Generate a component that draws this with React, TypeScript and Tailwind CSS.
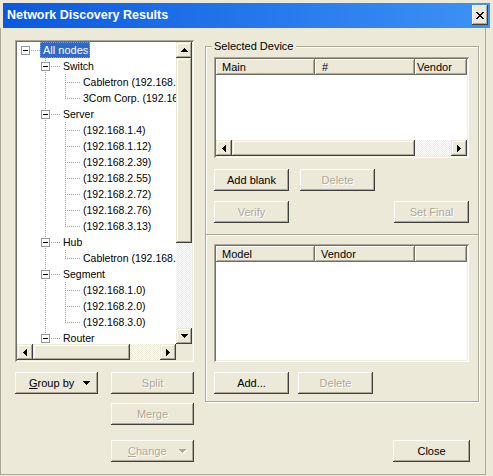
import React from "react";

type Dir = "up" | "down" | "left" | "right";

function Tri({ dir, color = "#000", className = "" }: { dir: Dir; color?: string; className?: string }) {
  const rows = [1, 3, 5, 7];
  if (dir === "up" || dir === "down") {
    return (
      <svg width="7" height="4" className={"block shrink-0 " + className} shapeRendering="crispEdges">
        {rows.map((w, i) => (
          <rect key={i} x={(7 - w) / 2} y={dir === "up" ? i : 3 - i} width={w} height={1} fill={color} />
        ))}
      </svg>
    );
  }
  return (
    <svg width="4" height="7" className={"block shrink-0 " + className} shapeRendering="crispEdges">
      {rows.map((w, i) => (
        <rect key={i} x={dir === "left" ? i : 3 - i} y={(7 - w) / 2} width={1} height={w} fill={color} />
      ))}
    </svg>
  );
}

const raisedBtn =
  "bg-[#ece9d8] shadow-[inset_-1px_-1px_#404040,inset_1px_1px_#ffffff,inset_-2px_-2px_#aca899,inset_2px_2px_#ece9d8]";
const raisedScroll =
  "bg-[#ece9d8] shadow-[inset_-1px_-1px_#404040,inset_1px_1px_#ece9d8,inset_-2px_-2px_#aca899,inset_2px_2px_#ffffff]";
const sunken =
  "shadow-[inset_1px_1px_#aca899,inset_-1px_-1px_#ffffff,inset_2px_2px_#716f64,inset_-2px_-2px_#f1efe2]";
const hatch = "bg-[image:repeating-conic-gradient(#ffffff_0_25%,#ece9d8_0_50%)] bg-[length:2px_2px]";
const disabledText = "text-[#aca899] [text-shadow:1px_1px_0_#ffffff]";

function ScrollBtn({ dir }: { dir: Dir }) {
  return (
    <div className={"w-[16px] h-[16px] shrink-0 flex items-center justify-center " + raisedScroll}>
      <Tri dir={dir} />
    </div>
  );
}

function Btn({
  children,
  disabled,
  className = "",
}: {
  children: React.ReactNode;
  disabled?: boolean;
  className?: string;
}) {
  return (
    <div
      className={
        "h-[22px] flex items-center justify-center leading-none " +
        raisedBtn +
        " " +
        (disabled ? disabledText : "text-black") +
        " " +
        className
      }
    >
      {children}
    </div>
  );
}

type Row = {
  label: string;
  level: number;
  kids?: boolean;
  last?: boolean;
  first?: boolean;
  sel?: boolean;
  cont: boolean[];
};

const L2 = [false, true];
const rows: Row[] = [
  { label: "All nodes", level: 0, kids: true, last: true, first: true, sel: true, cont: [] },
  { label: "Switch", level: 1, kids: true, cont: [false] },
  { label: "Cabletron (192.168.", level: 2, cont: L2 },
  { label: "3Com Corp. (192.16", level: 2, last: true, cont: L2 },
  { label: "Server", level: 1, kids: true, cont: [false] },
  { label: "(192.168.1.4)", level: 2, cont: L2 },
  { label: "(192.168.1.12)", level: 2, cont: L2 },
  { label: "(192.168.2.39)", level: 2, cont: L2 },
  { label: "(192.168.2.55)", level: 2, cont: L2 },
  { label: "(192.168.2.72)", level: 2, cont: L2 },
  { label: "(192.168.2.76)", level: 2, cont: L2 },
  { label: "(192.168.3.13)", level: 2, last: true, cont: L2 },
  { label: "Hub", level: 1, kids: true, cont: [false] },
  { label: "Cabletron (192.168.", level: 2, last: true, cont: L2 },
  { label: "Segment", level: 1, kids: true, cont: [false] },
  { label: "(192.168.1.0)", level: 2, cont: L2 },
  { label: "(192.168.2.0)", level: 2, cont: L2 },
  { label: "(192.168.3.0)", level: 2, last: true, cont: L2 },
  { label: "Router", level: 1, kids: true, cont: [false] },
];

const LINE = "#a0a0a0";

function ContCell({ on }: { on: boolean }) {
  return (
    <svg width="20" height="16" className="block shrink-0" shapeRendering="crispEdges">
      {on && <line x1="10.5" y1="0" x2="10.5" y2="16" stroke={LINE} strokeDasharray="1 1" />}
    </svg>
  );
}

function NodeCell({ row }: { row: Row }) {
  return (
    <svg width="25" height="16" className="block shrink-0" shapeRendering="crispEdges">
      {!row.first && <line x1="10.5" y1="0" x2="10.5" y2="8" stroke={LINE} strokeDasharray="1 1" />}
      {!row.last && <line x1="10.5" y1="8" x2="10.5" y2="16" stroke={LINE} strokeDasharray="1 1" />}
      <line x1="10" y1="8.5" x2="25" y2="8.5" stroke={LINE} strokeDasharray="1 1" />
      {row.kids && (
        <>
          <rect x="6.5" y="4.5" width="8" height="8" fill="#ffffff" stroke="#919b9c" />
          <line x1="8" y1="8.5" x2="13" y2="8.5" stroke="#000000" />
        </>
      )}
    </svg>
  );
}

function Tree() {
  return (
    <div className={"h-[322px] p-[2px] bg-white grid grid-cols-[159px_16px] grid-rows-[302px_16px] " + sunken}>
      <div className="overflow-hidden bg-white text-[10.5px]">
        {rows.map((r, i) => (
          <div key={i} className="flex h-[16px] ml-[-2px] items-center">
            {r.cont.map((c, j) => (
              <ContCell key={j} on={c} />
            ))}
            <NodeCell row={r} />
            <span
              className={
                "h-[16px] leading-[16px] whitespace-nowrap pl-[3px] pr-[2px] " +
                (r.sel
                  ? "bg-[#316ac5] text-white outline-1 outline-dotted outline-[#ce953a] -outline-offset-1 text-[11px]"
                  : "text-black")
              }
            >
              {r.label}
            </span>
          </div>
        ))}
      </div>
      <div className="flex flex-col">
        <ScrollBtn dir="up" />
        <div className={"h-[185px] shrink-0 " + raisedScroll} />
        <div className={"flex-1 " + hatch} />
        <ScrollBtn dir="down" />
      </div>
      <div className="flex">
        <ScrollBtn dir="left" />
        <div className={"w-[97px] shrink-0 " + raisedScroll} />
        <div className={"flex-1 " + hatch} />
        <ScrollBtn dir="right" />
      </div>
      <div className="bg-[#ece9d8]" />
    </div>
  );
}

const headCell =
  "h-[16px] flex items-center shrink-0 bg-[#ece9d8] shadow-[inset_-1px_-1px_#716f64,inset_1px_1px_#ffffff,inset_-2px_-2px_#aca899]";

function ListView({
  cols,
  height,
  scroll,
}: {
  cols: { label: string; w: string; pl: string }[];
  height: string;
  scroll?: boolean;
}) {
  return (
    <div className={"p-[2px] bg-white flex flex-col " + height + " " + sunken}>
      <div className="flex h-[16px] shrink-0 overflow-hidden">
        {cols.map((c, i) => (
          <div key={i} className={headCell + " " + c.w + " " + c.pl}>
            {c.label}
          </div>
        ))}
      </div>
      <div className="flex-1 bg-white" />
      {scroll && (
        <div className="flex h-[16px] shrink-0">
          <ScrollBtn dir="left" />
          <div className={"w-[183px] shrink-0 " + raisedScroll} />
          <div className={"flex-1 " + hatch} />
          <ScrollBtn dir="right" />
        </div>
      )}
    </div>
  );
}

function CloseGlyph() {
  const px = [
    "##....##",
    ".##..##.",
    "..####..",
    "...##...",
    "..####..",
    ".##..##.",
    "##....##",
  ];
  return (
    <svg width="8" height="7" className="block" shapeRendering="crispEdges">
      {px.flatMap((row, y) =>
        row.split("").map((ch, x) => (ch === "#" ? <rect key={x + "-" + y} x={x} y={y} width="1" height="1" fill="#000" /> : null))
      )}
    </svg>
  );
}

export default function App() {
  return (
    <div className="w-[493px] h-[476px] bg-[#ece9d8] overflow-hidden font-['Liberation_Sans',Arial,sans-serif] text-[11px] text-black select-none">
      <div className="pt-[3px] pl-[3px] pr-[3px]">
        <div className="h-[25px] flex bg-gradient-to-r from-[#0a58e0] to-[#3d92f5]">
          <span className="self-center pl-[4px] text-white font-bold text-[12.5px] leading-none whitespace-nowrap">
            Network Discovery Results
          </span>
          <div className={"ml-auto mr-[2px] mt-[2px] w-[16px] h-[20px] flex items-center justify-center " + raisedBtn}>
            <CloseGlyph />
          </div>
        </div>
      </div>

      <div className="w-[486px] h-[447px] border-l border-r border-b border-[#aca899] flex items-start">
        <div className="ml-[14px] mt-[12px] w-[179px] flex flex-col">
          <Tree />
          <div className="flex items-start gap-[13px] mt-[10px]">
            <Btn className="w-[83px] justify-start">
              <span className="pl-[14px]">
                <u>G</u>roup by
              </span>
              <Tri dir="down" className="ml-auto mr-[8px]" />
            </Btn>
            <div className="flex flex-col">
              <Btn disabled className="w-[83px]">
                Split
              </Btn>
              <Btn disabled className="w-[83px] mt-[9px]">
                Merge
              </Btn>
              <Btn disabled className="w-[83px] mt-[15px] justify-start">
                <span className="pl-[17px]">
                  <u>C</u>hange
                </span>
                <Tri dir="down" color="#aca899" className="ml-auto mr-[8px] drop-shadow-[1px_1px_0_#ffffff]" />
              </Btn>
            </div>
          </div>
        </div>

        <div className="ml-[11px] mt-[18px] w-[274px] flex flex-col">
          <div className="relative border border-[#aca899] shadow-[inset_1px_1px_#ffffff,1px_1px_#ffffff] pl-[8px] pr-[9px] pt-[10px] pb-[7px] flex flex-col">
            <span className="absolute left-[6px] top-[-7px] px-[2px] leading-[13px] bg-[#ece9d8] whitespace-nowrap">
              Selected Device
            </span>
            <ListView
              height="h-[101px]"
              scroll
              cols={[
                { label: "Main", w: "w-[99px]", pl: "pl-[6px]" },
                { label: "#", w: "w-[100px]", pl: "pl-[7px]" },
                { label: "Vendor", w: "w-[52px]", pl: "pl-[2px]" },
              ]}
            />
            <div className="flex gap-[11px] mt-[11px]">
              <Btn className="w-[75px]">Add blank</Btn>
              <Btn disabled className="w-[75px]">
                Delete
              </Btn>
            </div>
            <div className="flex justify-between mt-[10px]">
              <Btn disabled className="w-[75px]">
                Verify
              </Btn>
              <Btn disabled className="w-[75px]">
                Set Final
              </Btn>
            </div>
            <div className="ml-[-8px] mr-[-9px] mt-[11px] h-[2px] border-t border-[#aca899] bg-white" />
            <div className="mt-[8px]">
              <ListView
                height="h-[118px]"
                cols={[
                  { label: "Model", w: "w-[99px]", pl: "pl-[6px]" },
                  { label: "Vendor", w: "w-[100px]", pl: "pl-[6px]" },
                  { label: "", w: "w-[52px]", pl: "pl-[2px]" },
                ]}
              />
            </div>
            <div className="flex mt-[10px]">
              <Btn className="w-[75px]">Add...</Btn>
              <Btn disabled className="w-[75px] ml-[9px]">
                Delete
              </Btn>
            </div>
          </div>
          <div className="flex justify-end pr-[9px] mt-[38px]">
            <Btn className="w-[77px]">Close</Btn>
          </div>
        </div>
      </div>
    </div>
  );
}
